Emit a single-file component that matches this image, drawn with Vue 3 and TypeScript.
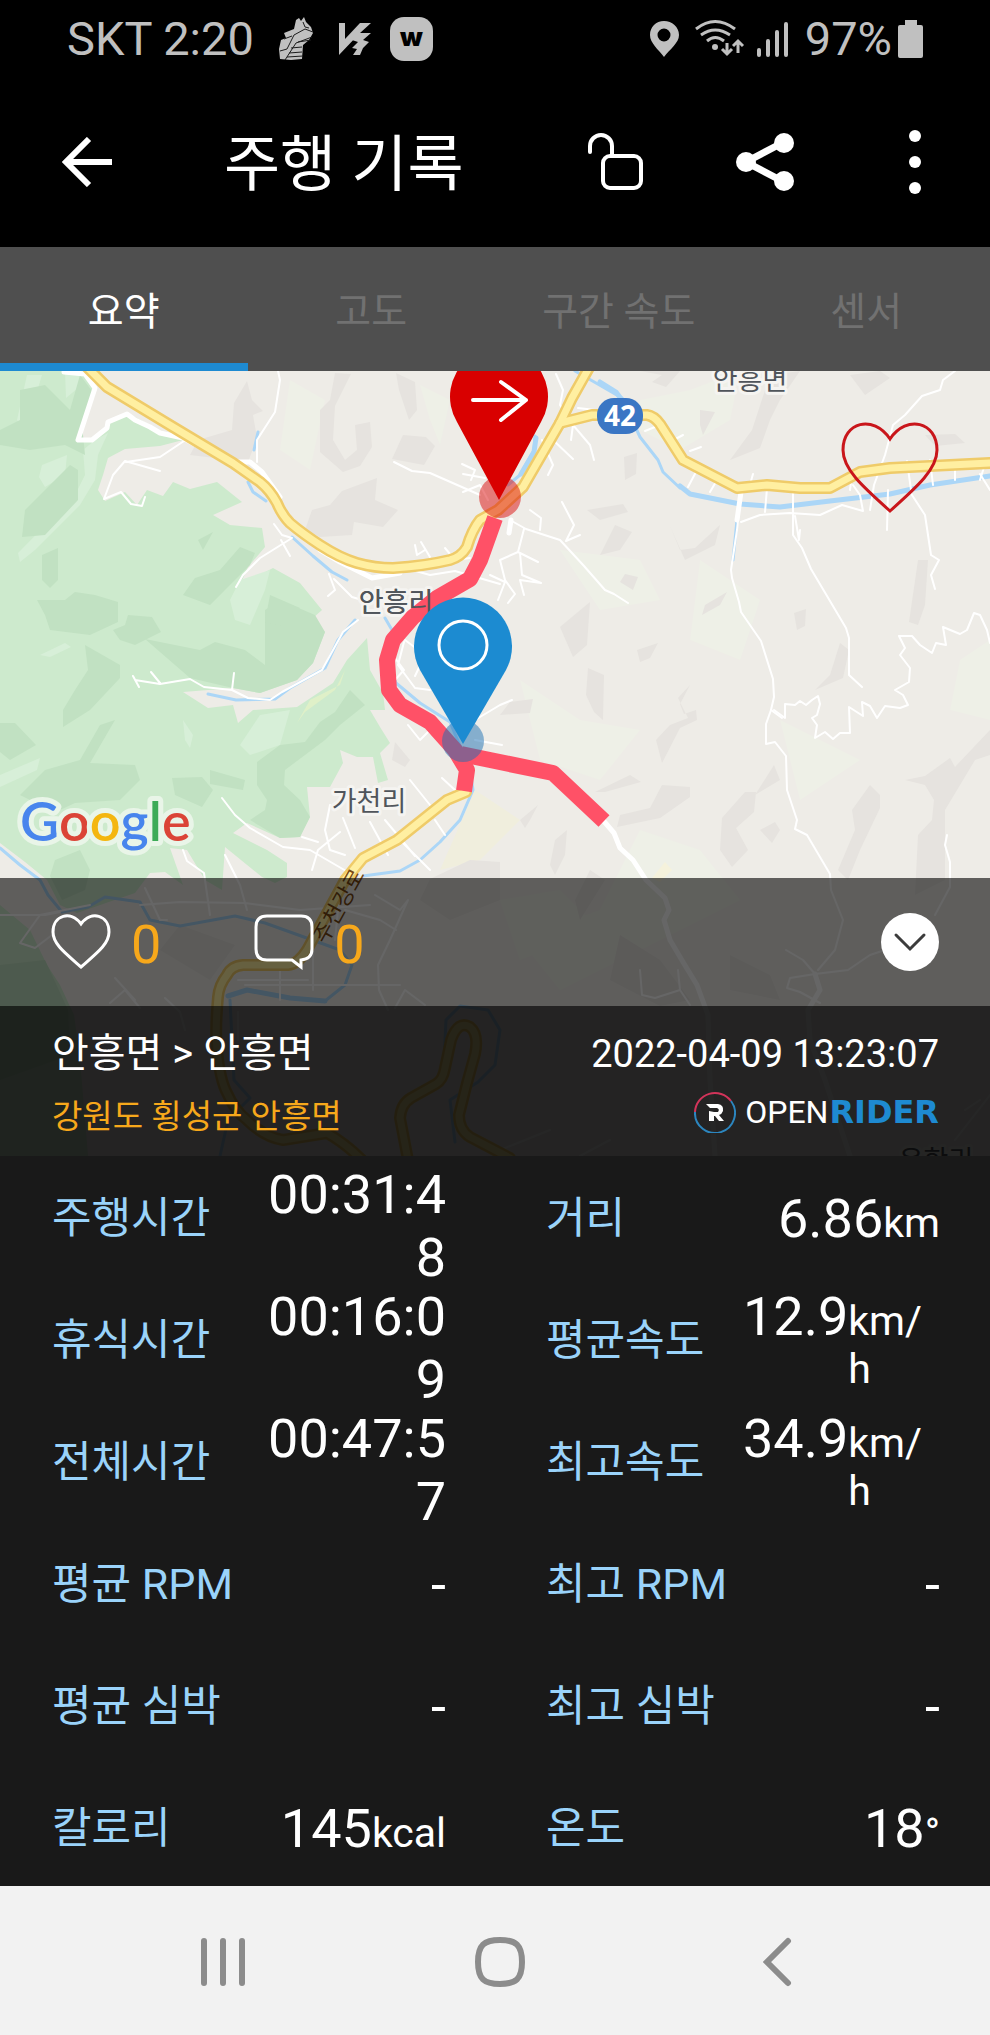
<script setup lang="ts">
import { ref } from 'vue'

interface Stat {
  label: string
  value: string
  unit?: string
  tall?: boolean
}

const tabs: string[] = ['요약', '고도', '구간 속도', '센서']
const activeTab = ref(0)

const stats: Stat[] = [
  { label: '주행시간', value: '00:31:48', tall: true },
  { label: '거리', value: '6.86', unit: 'km' },
  { label: '휴식시간', value: '00:16:09', tall: true },
  { label: '평균속도', value: '12.9', unit: 'km/h', tall: true },
  { label: '전체시간', value: '00:47:57', tall: true },
  { label: '최고속도', value: '34.9', unit: 'km/h', tall: true },
  { label: '평균 RPM', value: '-' },
  { label: '최고 RPM', value: '-' },
  { label: '평균 심박', value: '-' },
  { label: '최고 심박', value: '-' },
  { label: '칼로리', value: '145', unit: 'kcal' },
  { label: '온도', value: '18', unit: '°' },
]

const highways: string[] = [
  'M86 366L107 387L173 427L233 463L260 482Q270 490 277 503Q282 515 290 523Q303 534 320 545Q340 558 357 563Q375 568 393 568Q425 566 450 560Q461 557 467 547Q472 530 480 520L498 510L523 487L560 423L572 398L590 366',
  'M560 423L592 415L647 415Q654 416 660 424L683 460L737 488L767 485L800 488L830 488L860 472L890 468L990 463',
  'M466 792L447 800L397 840L363 858L345 880L307 950Q298 964 288 965L243 965Q231 966 227 975Q219 985 218 997Q215 1030 217 1050Q220 1080 227 1093Q235 1111 247 1120Q264 1137 283 1140L327 1133Q345 1143 362 1160',
  'M408 1160L400 1118Q401 1104 411 1098L436 1084Q443 1080 445 1068L451 1040Q458 1020 470 1027Q479 1034 475 1054L467 1083L459 1115Q459 1130 470 1137L510 1158',
]

const rivers: string[] = [
  'M575 371L596 383L622 398L640 437L658 460L663 472L680 488',
  'M535 436L534 450L520 475L508 485M258 432L254 450M737 520L733 560',
  'M248 482L253 492L266 501M292 537L313 556L332 572L347 580',
  'M385 618L392 630L388 660L396 683L420 703L450 722L470 770L473 790L460 820L440 842L420 860L400 871L363 876',
  'M208 694L236 700L275 699L290 688L325 668L338 640L355 620',
  'M0 848L20 865L40 880L48 895L62 912L88 907L105 897L140 902L150 920L180 926L235 916L265 923L340 950L352 965L345 985L325 1001',
  'M443 1083L446 1020L460 1006L488 1010L500 1030L495 1065L478 1082L450 1100L455 1142',
  'M230 1000L234 1080L250 1098L228 1120L220 1156',
]

const roads: string[] = [
  'M278 371L280 380L275 412L257 440L257 462M160 471L125 461L113 475L104 499L121 492L131 504L142 506L145 497M184 441L160 457L126 462',
  'M394 462L412 471L430 473L480 495M462 464L475 470L471 480M463 492L480 485L488 500M463 474L485 478',
  'M274 524L282 535L292 538L260 558L243 575L236 587M281 540L290 556M329 574L335 590L328 596M334 579L352 597L362 600',
  'M415 545L417 555L425 550M421 542L430 557M445 548L455 560L470 558M405 568L430 575L455 571L500 584',
  'M556 374L563 390L560 405L573 425L571 440M573 425L590 445L594 460M542 440L553 465L548 475M553 440L573 459M578 408L595 410L610 425',
  'M510 520L526 529L560 540L584 566L605 590L614 594L628 603M530 510L541 518L540 530M562 502L574 525L566 541L580 535M524 529L518 552L538 562M518 552L500 560L505 580L515 594L508 603M520 553L522 575L541 583L520 580L524 595M490 575L505 582L498 600',
  'M741 492L737 530L731 570L732 578L739 602L741 612L761 641L773 679L774 697L771 710L782 718M741 522L760 515L790 513L820 515L842 505L863 511L860 495L853 485M793 515L793 535L802 548L811 569L846 628L849 638L849 675L862 687M795 516L799 540L800 530',
  'M749 488L753 474M767 488L765 512M793 490L793 513M690 451L701 447M710 492L717 480M688 487L697 470M670 442L683 435M645 431L660 425M850 490L852 475M911 490L907 461M933 485L930 460M955 480L955 462M980 480L985 464',
  'M955 371L943 380L940 390L922 396L905 415L893 425L885 455L874 485L870 510M888 490L887 530M910 492L925 515L931 555L939 560L931 575L935 589M980 474L990 490',
  'M771 710L766 724L766 744L775 742L786 756L787 790L797 820L795 829L807 835L830 874L831 890L843 920L835 950L818 970',
  'M774 710L785 718L785 704L795 705L800 701L806 705L812 700L818 696L820 704L817 715L812 718L817 725L815 738L825 732L833 739L840 733L850 733L849 707L863 716L862 702L870 706L877 718L885 706L900 708L908 705L903 695L895 690L909 682L910 668L900 655L905 648L899 636L912 636L920 645L932 653L936 643L946 645L943 627L960 634L967 630L974 613L980 615L987 630L990 643',
  'M947 835L945 845L950 862L950 887L935 915',
  'M133 676L139 687M135 680L160 684L190 679L204 687L232 690L248 698L270 700L282 692L322 670L343 632L358 620M234 673L232 690M151 672L160 683',
  'M389 650L404 670L395 680M404 642L398 665L415 688L430 690M405 640L425 655L415 676M408 725L420 740L430 730M475 720L500 705L512 700M475 740L502 745',
  'M222 798L235 815L250 828L283 847L310 850L353 875M302 837L318 842M330 805L325 830L330 850L345 855M312 870L318 850L340 832M343 818L355 848M370 822L388 855M385 820L415 856M400 840L430 870M410 780L430 805M442 778L455 790M435 820L445 835',
  'M0 915L45 915L60 912M183 850L187 861L204 873L210 915M145 888L160 920L167 920M225 855L240 885L247 910M140 905L180 902L245 903L300 910L370 905',
  'M238 980L308 980M245 985L400 985M238 1012L238 1040M280 970L280 1000M313 950L313 990M340 890L335 940M375 895L400 910L408 900L390 940L378 965L379 990L388 1010M345 910L380 920L396 930M395 1008L405 990L425 1005',
  'M90 905L40 915L20 943L35 948L52 935M110 1003L125 990L140 1008M115 978L135 1000M165 998L180 1012L185 1030',
  'M640 970L642 995L655 998L680 990L690 1005M680 990L678 970M786 950L803 960L815 974L790 978L787 988L800 992L820 1003M815 974L848 970L870 955L885 950',
  'M500 1150L550 1130M580 1156L610 1140M955 1140L990 1095M965 1110L980 1100',
]

const shades: string[] = [
  'M247 381L234 403L232 430L198 440L190 455L248 462L257 438L253 415L263 411L252 400Z',
  'M335 373L351 374L335 406L333 440L345 460L357 450L355 425L370 422L372 447L360 466L343 472L320 452L320 410L330 400Z',
  'M396 373L415 382L417 410L409 420L399 390Z',
  'M403 435L426 437L435 446L424 465L392 459Z',
  'M377 478L342 491L330 505L312 510L305 530L320 537L352 535L354 522L383 527L398 510L375 500Z',
  'M640 371L680 371L666 387L652 382L662 375Z',
  'M770 375L800 371L780 400L770 420L760 448L730 460L752 430Z',
  'M700 410L715 412L703 435L700 425Z',
  'M624 457L637 453L636 474L625 480Z',
  'M587 510L623 504L628 512L600 520Z',
  'M615 525L632 532L620 550L600 555Z',
  'M670 526L680 550L695 548L720 525L715 545L685 560Z',
  'M850 375L880 371L890 378L865 395Z',
  'M925 435L955 434L965 443L935 446Z',
  'M918 560L928 560L925 605L918 625L909 622Z',
  'M590 602L560 627L573 657L587 645Z',
  'M625 574L638 577L633 590L620 582Z',
  'M705 605L727 592L720 605L702 615Z',
  'M794 613L806 609L805 626L797 630Z',
  'M637 650L658 643L650 658L640 662Z',
  'M588 668L604 675L603 720L594 712L586 695Z',
  'M840 643L849 650L843 678L815 690L830 675Z',
  'M690 685L678 698L688 718L670 725L656 740L662 763L680 728L697 720L696 710L684 714L680 704Z',
  'M510 702L533 699L530 713L500 715Z',
  'M595 792L630 775L641 782L605 792Z',
  'M662 785L690 787L690 797L660 818L617 827L620 815L650 808Z',
  'M745 792L756 792L754 812L736 828L748 850L732 867L720 850L722 818Z',
  'M760 830L775 822L780 830L772 843Z',
  'M755 795L774 765L780 780Z',
  'M990 730L990 755L975 760L945 810L945 880L915 895L918 835L932 820L934 800L925 785L905 780L925 776L950 758L955 767Z',
  'M870 785L880 795L880 808L860 850L848 880L838 870L855 830L852 810Z',
  'M555 840L567 830L565 855L555 875L550 865Z',
  'M520 820L538 805L530 820L525 828Z',
  'M430 879L470 860L500 862L500 900L450 920L420 900Z',
  'M395 742L410 760L405 767L392 760Z',
  'M620 935L660 960L690 1000L660 1006L610 980Z',
  'M730 955L770 975L780 1000L730 990Z',
  'M180 925L235 945L210 980L160 950Z',
  'M590 870L605 880L580 920L575 900Z',
]

const forestShades: string[] = [
  'M20 390L20 420L0 430L0 445L30 450L65 445L85 455L82 425L95 395L80 375L70 410L45 385Z',
  'M70 465L78 470L78 500L45 535L22 537L25 510Z',
  'M42 555L58 548L58 580L50 588L42 580Z',
  'M198 540L213 532L203 550Z',
  'M37 600L65 600L75 592L95 595L118 602L118 622L90 635L50 630L45 615Z',
  'M113 630L125 625L128 615L152 617L161 632L135 645L120 640Z',
  'M240 547L255 553L250 565L225 590L210 605L183 595L195 578L220 570Z',
  'M145 639L200 650L215 642L245 650L265 665L265 610L280 600L315 615L325 632L313 663L297 680L260 693L233 688L190 678Z',
  'M85 645L120 665L120 678L90 710L63 727L63 710L75 690L88 670Z',
  'M115 720L90 763L135 765L140 780L120 800L75 803L60 810L30 800L20 795L45 770L80 760L100 725Z',
  'M0 723L15 723L36 745L10 760L0 752Z',
  'M335 712L350 690L365 705L340 725L325 740L305 755L285 770L284 785L300 800L310 817L300 837L280 838L250 820L265 810L267 800L257 785L257 762L280 745L305 742L320 722Z',
  'M172 778L202 777L213 790L202 807L175 795Z',
  'M210 770L245 780L243 790L210 784Z',
  'M270 595L300 608L285 626L265 622Z',
  'M55 860L80 850L90 870L85 890L62 900L50 876Z',
  'M0 965L45 960L68 1010L70 1055L0 1080Z',
]

const forestLights: string[] = [
  'M27 375L42 375L30 415L45 405L50 410L38 425L25 430L17 420Z',
  'M65 371L82 371L78 388L66 398Z',
  'M42 465L67 455L65 475L45 487L39 477Z',
  'M95 440L108 433L98 455L95 480L80 505L35 550L20 562L18 553L75 495L85 475L83 450Z',
  'M230 600L240 580L270 570L265 590L250 625L235 620Z',
  'M40 655L65 643L71 647L50 657Z',
  'M0 775L40 758L37 770L0 787Z',
  'M183 720L193 735L190 748L185 740Z',
  'M240 745L260 715L290 710L280 745L250 755Z',
]
</script>

<template>
  <main class="screen">
    <div class="status">
      <span>SKT 2:20</span>
      <svg class="shoe" width="36" height="46" viewBox="276 14 36 46" aria-hidden="true">
        <path d="M278 57L277 47L279 38L284 36L282 31L292 27L294 18L297 16L299 19L302 15L304 20L309 25L311 31L307 38L301 43L300 57L289 58Z" fill="#c0c0c0" />
        <path d="M278 49L285 47L292 33L303 27L311 30M283 58L294 41L310 35M282 37L290 34M289 46L300 45M287 51L300 50M285 55L301 54M296 40L309 38M301 20L303 25L307 26" fill="none" stroke="#1c1c1c" stroke-width="1" />
      </svg>
      <svg class="vmark" width="34" height="34" viewBox="338 20 34 34" aria-hidden="true">
        <path d="M339 21H345V37L360 21H371L360 31H371L363 38L369 40L363 46L360 53H353L357 47L352 46L358 40L352 38L357 34L339 53Z" fill="#c0c0c0" />
      </svg>
      <span class="wbadge">w</span>
      <span class="grow"></span>
      <svg width="142" height="46" viewBox="648 14 142 46" aria-hidden="true">
        <path fill="#c0c0c0" fill-rule="evenodd" d="M663 19C655 19 649 25 649 33C649 41 657 47 663 55C669 47 678 41 678 33C678 25 671 19 663 19ZM663 26.500A6.500 6.500 0 1 1 663 39.500A6.500 6.500 0 1 1 663 26.500Z" />
        <g fill="none" stroke="#c0c0c0" stroke-width="3">
          <path d="M695 27Q714 12 734 27M700 33Q714 23 729 33M706 39Q714 32 723 39" />
          <path d="M726 41V52M721 47L726 52L731 47M737 51V40M732 44L737 39L742 44" />
        </g>
        <circle cx="714" cy="45" r="3" fill="#c0c0c0" />
        <path d="M758 48V53M767 39V53M776 30V53M785 22V53" stroke="#c0c0c0" stroke-width="4" stroke-linecap="round" />
      </svg>
      <span class="percent">97%</span>
      <svg class="battery" width="26" height="38" viewBox="0 0 26 38" aria-hidden="true">
        <path d="M7 0H19V5H23Q25 5 25 7V36Q25 38 23 38H2Q0 38 0 36V7Q0 5 2 5H7Z" fill="#c0c0c0" />
      </svg>
    </div>

    <header class="appbar">
      <button class="back" type="button" aria-label="뒤로">
        <svg width="50" height="50" viewBox="0 0 50 50"><path d="M50 25H4M27 2L4 25L27 48" fill="none" stroke="#fff" stroke-width="6" /></svg>
      </button>
      <h1>주행 기록</h1>
      <button class="action" type="button" aria-label="잠금 해제">
        <svg width="58" height="60" viewBox="587 131 58 60"><g fill="none" stroke="#fff" stroke-width="4" stroke-linecap="round"><path d="M591 151V145A11 11 0 0 1 613 145V154" /><rect x="604" y="155" width="38" height="32" rx="7" /></g></svg>
      </button>
      <button class="action" type="button" aria-label="공유">
        <svg width="60" height="60" viewBox="736 130 60 60"><path d="M785 140L747 160L785 180" fill="none" stroke="#fff" stroke-width="7" /><g fill="#fff"><circle cx="785" cy="141" r="10" /><circle cx="747" cy="160" r="10" /><circle cx="785" cy="179" r="10" /></g></svg>
      </button>
      <button class="action" type="button" aria-label="더보기">
        <svg width="14" height="66" viewBox="0 0 14 66" fill="#fff"><circle cx="7" cy="7" r="6" /><circle cx="7" cy="33" r="6" /><circle cx="7" cy="59" r="6" /></svg>
      </button>
    </header>

    <nav class="tabs">
      <button v-for="(tab, i) in tabs" :key="tab" type="button" :class="{ active: i === activeTab }" @click="activeTab = i">{{ tab }}</button>
    </nav>

    <section class="hero">
      <svg class="map" viewBox="0 371 990 785" preserveAspectRatio="xMidYMid slice" aria-label="주행 경로 지도">
        <rect y="371" width="990" height="785" fill="#eeece7" />
        <g fill="#eef0e7">
          <path d="M290 380L325 400L310 470L280 450ZM420 385L450 400L440 445L430 420Z" />
          <path d="M640 400L690 390L740 371L730 420L680 450L640 430ZM560 550L640 560L660 600L600 610ZM700 560L760 600L740 660L690 640ZM520 680L580 720L640 730L600 780L540 760ZM640 830L700 850L740 900L660 940L560 990L520 940L600 910ZM780 720L860 760L800 800ZM960 660L990 640L990 720L950 710ZM500 900L560 890L600 930L520 960Z" />
        </g>
        <path d="M475 790L520 820L480 860L440 870Z" fill="#f0eedd" />
        <path d="M652 878L665 862L672 870L660 882Z" fill="#f5f2dc" />
        <path v-for="d in shades" :key="d" :d="d" fill="#e6e3df" />
        <g fill="#cdeacd">
          <path d="M0 371H62L68 375L85 374L95 388L78 440L92 440L107 425L127 413L150 425L170 437L183 440L160 446L125 449L108 458L103 475L98 490L105 501L125 492L137 505L147 490L163 496L173 482L190 489L217 482L242 502L213 515L230 525L262 528L265 547L248 567L240 585L273 568L300 583L322 610L313 618L325 632L313 663L297 680L260 693L233 688L183 692L208 708L233 705L238 723L253 710L297 707L333 683L347 660L367 638L370 670L383 693L385 710L370 710L380 727L390 743L380 753L388 780L378 783L373 757L357 757L340 750L343 763L330 787L307 787L310 817L300 837L280 838L247 823L233 833L267 850L287 863L287 877L275 883L262 877L225 847L222 890L205 880L187 850L170 848L183 885L165 872L150 873L135 893L77 913L60 905L47 880L25 862L0 843Z" />
          <path d="M0 905L30 930L47 965L60 985L74 1015L80 1060L88 1156H0Z" />
        </g>
        <path v-for="d in forestLights" :key="d" :d="d" fill="#d7efd8" />
        <path v-for="d in forestShades" :key="d" :d="d" fill="#c1e1c2" />
        <path d="M297 723L310 700L340 685L345 670L335 690L305 712Z" fill="#dff0c8" />
        <g fill="none" stroke-linejoin="round" stroke-linecap="round">
          <path v-for="d in rivers" :key="d" :d="d" stroke="#abd6f7" stroke-width="3" />
          <path d="M600 382L616 392L622 400M536 438L534 452L521 474M680 486L690 494L740 504L780 507L830 501L890 494L930 485L990 476M228 996L247 990L290 998L325 1001" stroke="#abd6f7" stroke-width="5" />
          <path v-for="d in roads" :key="d" :d="d" stroke="#fff" stroke-width="2" />
          <path d="M64 372L85 374L95 388L78 440L92 440L107 428L108 422L127 414L135 420L150 427L160 433L183 438L215 455L233 463M235 462L250 462L262 472L280 497M320 550L340 562L372 578L400 573M741 492L737 520M511 520L509 533" stroke="#fff" stroke-width="5" />
          <path d="M602 819L614 833L620 848L633 860L646 880L665 898L669 910L664 920L670 940L683 962L697 985L708 1015L710 1080L715 1156M852 865M815 974L820 990L808 1010L810 1040L825 1080L850 1156" stroke="#fff" stroke-width="5" />
          <path v-for="d in highways" :key="d" :d="d" stroke="#efcb69" stroke-width="12" />
          <path v-for="d in highways" :key="d" :d="d" stroke="#ffefa1" stroke-width="7" />
        </g>
        <g class="place" text-anchor="middle">
          <text x="750" y="390">안흥면</text>
          <text x="396" y="612">안흥리</text>
          <text x="369" y="811">가천리</text>
          <text x="936" y="1170">운학리</text>
        </g>
        <text class="street" transform="translate(326 945) rotate(-61)">주천강로</text>
        <g fill="none" stroke="#ff5167" stroke-width="16" stroke-linejoin="round">
          <path d="M495 518L480 560L470 579L437 598L413 617L393 640L387 660L389 690L400 705L430 722L455 750L467 770L464 791" />
          <path d="M461 754L490 760L553 773L604 821" />
        </g>
        <text class="place behind" x="396" y="612" text-anchor="middle">안흥리</text>
        <circle cx="500" cy="497" r="21" fill="#d90000" fill-opacity=".48" />
        <path d="M499 500L457 422A49 49 0 1 1 541 422Z" fill="#d90000" />
        <path d="M473 400H526M501 382L526 400L501 420" fill="none" stroke="#fff" stroke-width="4" stroke-linecap="round" stroke-linejoin="round" />
        <circle cx="463" cy="741" r="21" fill="#1c6fb3" fill-opacity=".5" />
        <path d="M463 744L420 670A49 49 0 1 1 506 670Z" fill="#1c8bd1" />
        <circle cx="463" cy="645" r="24" fill="none" stroke="#fff" stroke-width="3" />
        <rect x="597" y="398" width="46" height="36" rx="17" fill="#3a76c4" />
        <text class="shield" x="620" y="426" text-anchor="middle">42</text>
        <text class="google" x="20" y="841"><tspan fill="#4885ed">G</tspan><tspan fill="#db4437">o</tspan><tspan fill="#f4b60f">o</tspan><tspan fill="#4885ed">g</tspan><tspan fill="#3cab57">l</tspan><tspan fill="#db4437">e</tspan></text>
      </svg>

      <div class="mapview">
        <button class="favorite" type="button" aria-label="좋아요">
          <svg width="98" height="94" viewBox="0 0 98 94"><path d="M49 18C32-7 2 1 2 29C2 48 21 65 49 90C77 65 96 48 96 29C96 1 66-7 49 18Z" fill="none" stroke="#c9161b" stroke-width="3" /></svg>
        </button>
      </div>

      <div class="social">
        <button class="count" type="button">
          <svg width="60" height="56" viewBox="0 0 60 56" aria-hidden="true"><path d="M30 10C20-4 2 1 2 18C2 30 14 39 30 53C46 39 58 30 58 18C58 1 40-4 30 10Z" fill="none" stroke="#fff" stroke-width="3" /></svg>
          <span>0</span>
        </button>
        <button class="count" type="button">
          <svg width="60" height="56" viewBox="0 0 60 56" aria-hidden="true"><path d="M13 2H47Q58 2 58 13V35Q58 45 47 46V53L38 46H13Q2 46 2 35V13Q2 2 13 2Z" fill="none" stroke="#fff" stroke-width="3" /></svg>
          <span>0</span>
        </button>
        <span class="grow"></span>
        <button class="collapse" type="button" aria-label="접기">
          <svg width="34" height="20" viewBox="0 0 34 20"><path d="M3 3L17 17L31 3" fill="none" stroke="#3c3c3c" stroke-width="3" stroke-linecap="round" /></svg>
        </button>
      </div>

      <div class="info">
        <div class="line">
          <span class="route">안흥면 &gt; 안흥면</span>
          <time datetime="2022-04-09T13:23:07">2022-04-09 13:23:07</time>
        </div>
        <div class="line">
          <span class="region">강원도 횡성군 안흥면</span>
          <span class="brand">
            <svg width="42" height="42" viewBox="0 0 42 42" aria-hidden="true">
              <path d="M1 21A20 20 0 0 1 37 10" fill="none" stroke="#d2345a" stroke-width="2" />
              <path d="M37 10A20 20 0 1 1 1 21" fill="none" stroke="#2c86bf" stroke-width="2" />
              <path d="M12 13H24Q30 14 29 20Q28 23 25 24L30 30H25L21 25H20V30H15V20L20 21H24Q26 18 23 17H16Z" fill="#fff" />
            </svg>
            <span class="open">OPEN</span><b>RIDER</b>
          </span>
        </div>
      </div>
    </section>

    <dl class="stats">
      <div v-for="s in stats" :key="s.label" class="stat">
        <dt>{{ s.label }}</dt>
        <dd :class="{ tall: s.tall }"><span class="value">{{ s.value }}</span><span v-if="s.unit" class="unit">{{ s.unit }}</span></dd>
      </div>
    </dl>

    <nav class="system">
      <button type="button" aria-label="최근 앱"><svg width="46" height="50" viewBox="0 0 46 50"><path d="M4 4V46M23 4V46M42 4V46" stroke="#8c8c8c" stroke-width="6" stroke-linecap="round" /></svg></button>
      <button type="button" aria-label="홈"><svg width="52" height="52" viewBox="0 0 52 52"><path d="M26 4C42 4 48 9 48 26C48 43 42 48 26 48C10 48 4 43 4 26C4 9 10 4 26 4Z" fill="none" stroke="#8c8c8c" stroke-width="6" /></svg></button>
      <button type="button" aria-label="뒤로"><svg width="30" height="50" viewBox="0 0 30 50"><path d="M26 4L5 25L26 46" fill="none" stroke="#8c8c8c" stroke-width="6" stroke-linecap="round" /></svg></button>
    </nav>
  </main>
</template>

<style>
body {
  margin: 0;
  background: #191919;
}
</style>

<style scoped>
.screen {
  font-family: Roboto, "Noto Sans CJK KR", sans-serif;
  color: #fff;
  background: #191919;
}
button {
  display: flex;
  align-items: center;
  justify-content: center;
  margin: 0;
  padding: 0;
  border: 0;
  background: none;
  color: inherit;
  font: inherit;
  cursor: pointer;
}
svg {
  display: block;
  flex: none;
}
.grow {
  flex: 1;
}
.status {
  display: flex;
  align-items: center;
  height: 77px;
  padding: 0 66px 0 67px;
  background: #000;
  color: #c0c0c0;
  font-size: 47px;
  line-height: 54px;
  white-space: nowrap;
}
.shoe {
  margin-left: 24px;
}
.vmark {
  margin-left: 24px;
}
.wbadge {
  display: flex;
  align-items: center;
  justify-content: center;
  width: 43px;
  height: 44px;
  margin-left: 18px;
  border-radius: 14px;
  background: #c0c0c0;
  color: #000;
  font: 900 26px/30px Inter, sans-serif;
  padding-bottom: 4px;
  box-sizing: border-box;
}
.percent {
  margin: 0 6px 0 14px;
}
.appbar {
  display: flex;
  align-items: center;
  height: 170px;
  background: #000;
}
.back {
  width: 174px;
  height: 170px;
}
h1 {
  flex: 1;
  margin: 0;
  padding: 6px 0 0 50px;
  font-size: 61px;
  font-weight: 400;
  line-height: 80px;
  white-space: nowrap;
}
.action {
  width: 150px;
  height: 170px;
}
.tabs {
  display: grid;
  grid-template-columns: repeat(4, 1fr);
  background: #4f4f4f;
}
.tabs button {
  height: 124px;
  box-sizing: border-box;
  border-top: 6px solid transparent;
  border-bottom: 8px solid transparent;
  color: #717171;
  font-size: 39px;
}
.tabs .active {
  color: #fff;
  border-bottom-color: #1e8ad1;
}
.hero {
  position: relative;
  overflow: hidden;
}
.map {
  position: absolute;
  inset: 0;
  width: 100%;
  height: 100%;
}
.place {
  font-family: "Noto Sans CJK KR", sans-serif;
  font-size: 27px;
  fill: #50555b;
  stroke: #f5f4f1;
  stroke-width: 6px;
  stroke-linejoin: round;
  paint-order: stroke;
}
.behind {
  stroke: none;
}
.street {
  font-family: "Noto Sans CJK KR", sans-serif;
  font-size: 22px;
  fill: #7a4a12;
}
.shield {
  font-family: "Noto Sans", sans-serif;
  font-size: 28px;
  font-weight: 700;
  fill: #fff;
}
.google {
  font-family: Lato, sans-serif;
  font-size: 54px;
  font-weight: 600;
  stroke: #e9f5e8;
  stroke-width: 10px;
  stroke-linejoin: round;
  paint-order: stroke;
}
.mapview {
  position: relative;
  height: 507px;
}
.favorite {
  position: absolute;
  top: 50px;
  right: 51px;
}
.social {
  position: relative;
  display: flex;
  align-items: center;
  height: 128px;
  padding: 0 51px;
  background: rgba(0, 0, 0, 0.6);
}
.count {
  gap: 20px;
  margin-right: 93px;
  color: #f7a81b;
  font-size: 54px;
  line-height: 56px;
}
.count span {
  padding-top: 6px;
}
.collapse {
  width: 58px;
  height: 58px;
  border-radius: 50%;
  background: #fff;
}
.info {
  position: relative;
  display: grid;
  align-content: start;
  gap: 6px;
  box-sizing: border-box;
  height: 150px;
  padding: 16px 51px 0 52px;
  background: rgba(0, 0, 0, 0.85);
}
.line {
  display: flex;
  align-items: center;
  justify-content: space-between;
  height: 56px;
  white-space: nowrap;
}
.route {
  font-size: 40px;
}
.line time {
  padding-top: 8px;
  font-size: 38px;
}
.region {
  padding-top: 4px;
  color: #f7a81b;
  font-size: 33px;
}
.brand {
  display: flex;
  align-items: center;
  font-size: 32px;
}
.open {
  margin-left: 9px;
}
.brand b {
  margin-left: 1px;
  color: #1e8ad1;
  font: 700 32px/40px "DejaVu Sans", sans-serif;
}
.stats {
  display: grid;
  grid-template-columns: 1fr 1fr;
  gap: 2px 100px;
  margin: 0;
  padding: 0 50px 0 52px;
}
.stat {
  display: grid;
  grid-template-columns: 1fr 1fr;
  grid-template-rows: 120px;
  align-items: center;
  height: 120px;
}
dt {
  padding-top: 4px;
  color: #9ad3fa;
  font-size: 43px;
  line-height: 56px;
  white-space: nowrap;
}
dd {
  display: flex;
  align-items: baseline;
  justify-content: flex-end;
  margin: 0;
  padding-top: 4px;
  font-size: 54px;
  line-height: 63px;
  word-break: break-all;
}
.tall {
  align-self: start;
  padding-top: 7px;
}
.value {
  flex: none;
  max-width: 100%;
  text-align: right;
}
.unit {
  font-size: 41px;
  line-height: 48px;
}
.system {
  display: grid;
  grid-template-columns: repeat(3, 1fr);
  padding: 0 74px 0 84px;
  background: #f2f2f2;
}
.system button {
  height: 149px;
  padding-top: 2px;
}
</style>
